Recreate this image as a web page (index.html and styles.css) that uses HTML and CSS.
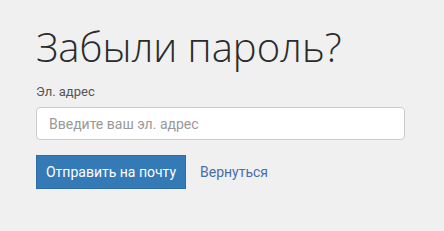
FILE: index.html
```html
<!DOCTYPE html>
<html lang="ru">
<head>
  <meta charset="UTF-8">
  <meta name="viewport" content="width=device-width, initial-scale=1.0">
  <title>Забыли пароль?</title>
  <link rel="stylesheet" href="styles.css">
</head>
<body>

  <div class="forgot">
    <h1 class="forgot-title">Забыли пароль?</h1>
    <form class="forgot-form">
      <label class="forgot-label" for="email">Эл. адрес</label>
      <input class="forgot-input" id="email" type="email" placeholder="Введите ваш эл. адрес">
      <div class="forgot-actions">
        <button class="btn-primary" type="submit">Отправить на почту</button>
        <a class="back-link" href="#">Вернуться</a>
      </div>
    </form>
  </div>

</body>
</html>
```

FILE: styles.css
```css
body {
  margin: 0;
  background-color: #f0f0f0;
  font-family: Roboto, Arial, sans-serif;
  color: #333;
}

.forgot {
  width: 369px;
  padding: 23px 36px;
}

.forgot-title {
  margin: 0 0 12px;
  font-family: "Open Sans", Arial, sans-serif;
  font-size: 40px;
  font-weight: 300;
  line-height: 48px;
  color: #2b2b2b;
}

.forgot-form {
  display: flex;
  flex-direction: column;
}

.forgot-label {
  font-size: 13px;
  line-height: 18px;
  color: #555;
  margin-bottom: 6px;
}

.forgot-input {
  height: 33px;
  box-sizing: border-box;
  padding: 0 12px;
  border: 1px solid #ccc;
  border-radius: 4px;
  background: #fff;
  font-family: inherit;
  font-size: 14px;
  color: #555;
}

.forgot-input::placeholder {
  color: #999;
}

.forgot-actions {
  display: flex;
  align-items: center;
  gap: 14px;
  margin-top: 15px;
}

.btn-primary {
  width: 150px;
  height: 34px;
  padding: 0;
  border: 1px solid #2e6da4;
  background-color: #337ab7;
  color: #fff;
  font-family: inherit;
  font-size: 14px;
  white-space: nowrap;
  cursor: pointer;
}

.back-link {
  font-size: 14px;
  color: #4a6ea8;
  text-decoration: none;
}
```
